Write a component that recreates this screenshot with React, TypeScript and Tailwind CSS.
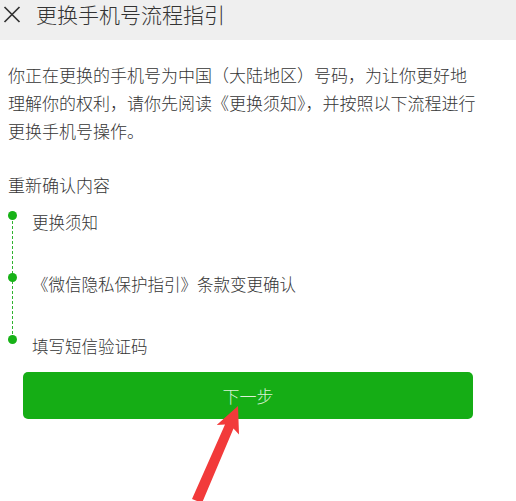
import React from "react";

export default function App() {
  const items = ["更换须知", "《微信隐私保护指引》条款变更确认", "填写短信验证码"];
  return (
    <div
      className="relative w-[516px] h-[501px] overflow-hidden bg-white text-[#333333] font-light"
      style={{ fontFamily: '"Noto Sans CJK SC", "Noto Sans", sans-serif' }}
    >
      <div className="h-[40px] bg-[#efefef]">
        <div className="flex h-[28px] items-center">
          <svg width="24" height="24" viewBox="0 0 24 24">
            <path d="M4.5 5 L19.5 20 M19.5 5 L4.5 20" stroke="#333" strokeWidth="1.7" fill="none" />
          </svg>
          <span className="ml-[12px] text-[21px] leading-[28px] text-[#333]">更换手机号流程指引</span>
        </div>
      </div>

      <div className="px-[8px] pt-[21px] text-[17px] leading-[28px] text-[#353535]">
        <div className="whitespace-nowrap">你正在更换的手机号为中国（大陆地区）号码，为让你更好地</div>
        <div className="whitespace-nowrap">理解你的权利，请你先阅读《更换须知》，并按照以下流程进行</div>
        <div className="whitespace-nowrap">更换手机号操作。</div>
      </div>

      <div className="mt-[28px] px-[8px] text-[17px] leading-[24px] text-[#353535]">重新确认内容</div>

      <div className="relative mt-[13px] flex flex-col gap-[38px] pl-[8px]">
        <div className="absolute left-[11.5px] top-[6px] h-[123px] border-l border-dashed border-[#2fb32f]" />
        {items.map((t, i) => (
          <div key={i} className="flex h-[24px] items-start">
            <div className="relative z-10 mt-[1px] h-[9px] w-[9px] shrink-0 rounded-full bg-[#17b217]" />
            <span className="ml-[15px] whitespace-nowrap text-[16.5px] leading-[24px] text-[#353535]">{t}</span>
          </div>
        ))}
      </div>

      <div className="mx-[23px] mt-[14px] flex h-[47px] w-[450px] items-center justify-center rounded-[5px] bg-[#15ad15]">
        <span className="text-[17px] text-[#dcf2d8]">下一步</span>
      </div>

      <svg className="pointer-events-none absolute left-0 top-0" width="516" height="501" viewBox="0 0 516 501">
        <polygon
          points="238,406 239,434.6 233.5,428.5 202,503 192,499 225,424.5 216.7,425.1"
          fill="#f23a3a"
        />
      </svg>
    </div>
  );
}
